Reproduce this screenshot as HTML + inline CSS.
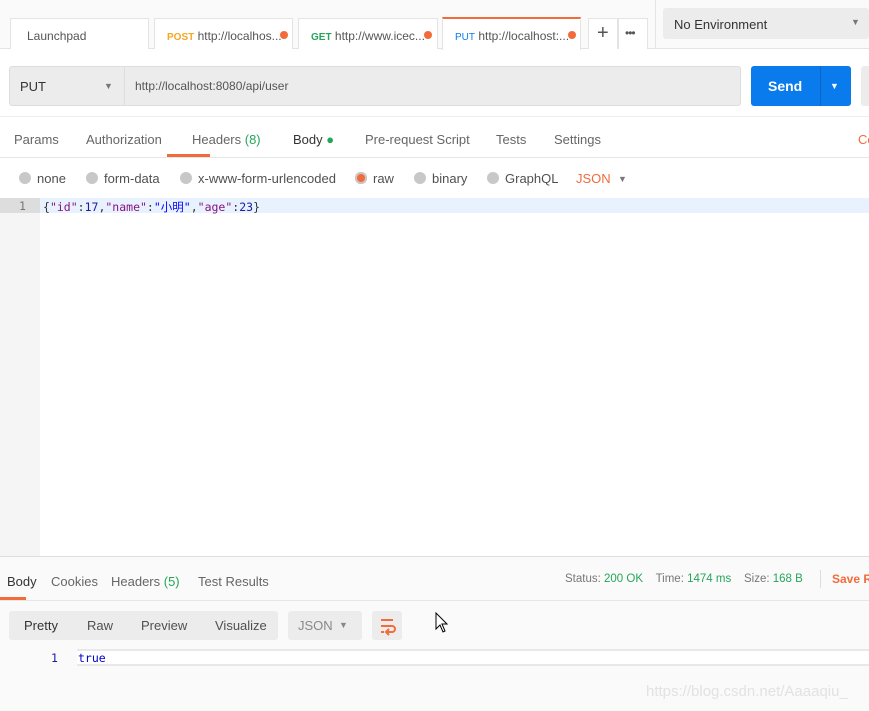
<!DOCTYPE html>
<html><head><meta charset="utf-8"><style>
*{box-sizing:border-box;margin:0;padding:0}
body{width:869px;height:711px;overflow:hidden;background:#fff;font-family:"Liberation Sans","Noto Sans CJK SC",sans-serif;font-size:13px;color:#505050;position:relative}
.a{position:absolute}
.tab{position:absolute;top:18px;height:31px;border:1px solid #e4e4e4;border-bottom:none;background:#fff;font-size:12px;padding:10px 0 0 12px;white-space:nowrap;color:#555}
.dot{position:absolute;width:8px;height:8px;border-radius:50%;background:#f26b3a}
.rad{position:absolute;top:172px;width:12px;height:12px;border-radius:50%;background:#c8c8c8}
.mono{font-family:"DejaVu Sans Mono","Liberation Mono","Noto Sans CJK SC",monospace;font-size:11.5px}
</style></head><body>
<div class="a" style="left:0;top:0;width:869px;height:49px;background:#fafafa;border-bottom:1px solid #e4e4e4"></div>
<div class="tab" style="left:10px;width:139px;padding-left:16px">Launchpad</div>
<div class="tab" style="left:154px;width:139px"><b style="color:#f5a623;font-size:10px">POST</b> http://localhos...</div><div class="dot" style="left:280px;top:31px"></div>
<div class="tab" style="left:298px;width:140px"><b style="color:#26a55a;font-size:10px">GET</b> http://www.icec...</div><div class="dot" style="left:424px;top:31px"></div>
<div class="tab" style="left:442px;width:139px;border-top:2px solid #f26b3a;top:17px;height:33px"><b style="color:#097bed;font-size:10px;font-weight:normal">PUT</b> http://localhost:...</div><div class="dot" style="left:568px;top:31px"></div>
<div class="tab" style="left:588px;width:30px;padding:3px 0 0 8px;font-size:20px;color:#555">+</div>
<div class="tab" style="left:618px;width:30px;padding:7px 0 0 6px;font-size:12px;letter-spacing:-1px;color:#555">•••</div>
<div class="a" style="left:655px;top:0;width:1px;height:49px;background:#e4e4e4"></div>
<div class="a" style="left:663px;top:8px;width:206px;height:31px;background:#ececec;border-radius:3px;padding:9px 0 0 11px;color:#333">No Environment<span style="position:absolute;left:188px;top:9px;font-size:9px;color:#777">▼</span></div>
<div class="a" style="left:9px;top:66px;width:732px;height:40px;background:#ececec;border:1px solid #ddd;border-radius:3px"></div>
<div class="a" style="left:124px;top:67px;width:1px;height:38px;background:#ddd"></div>
<div class="a" style="left:20px;top:79px;color:#333">PUT</div>
<div class="a" style="left:104px;top:81px;font-size:9px;color:#777">▼</div>
<div class="a" style="left:135px;top:79px;font-size:12px;color:#555">http://localhost:8080/api/user</div>
<div class="a" style="left:751px;top:66px;width:100px;height:40px;background:#097bed;border-radius:3px"></div>
<div class="a" style="left:820px;top:66px;width:1px;height:40px;background:#0a67c6"></div>
<div class="a" style="left:768px;top:78px;color:#fff;font-weight:bold;font-size:14px">Send</div>
<div class="a" style="left:830px;top:81px;color:#fff;font-size:9px">▼</div>
<div class="a" style="left:861px;top:66px;width:10px;height:40px;background:#ececec;border-radius:3px"></div>
<div class="a" style="left:0;top:116px;width:869px;height:1px;background:#eee"></div>
<div class="a" style="left:0;top:132px;width:869px;white-space:nowrap;color:#666">
<span class="a" style="left:14px">Params</span><span class="a" style="left:86px">Authorization</span><span class="a" style="left:192px">Headers <span style="color:#26a55a">(8)</span></span><span class="a" style="left:293px;color:#333">Body <span style="color:#26a55a">●</span></span><span class="a" style="left:365px">Pre-request Script</span><span class="a" style="left:496px">Tests</span><span class="a" style="left:554px">Settings</span><span class="a" style="left:858px;color:#f26b3a">Co</span></div>
<div class="a" style="left:167px;top:154px;width:43px;height:3px;background:#f26b3a"></div>
<div class="a" style="left:0;top:157px;width:869px;height:1px;background:#e6e6e6"></div>
<div class="rad" style="left:19px"></div><div class="a" style="left:37px;top:171px">none</div>
<div class="rad" style="left:86px"></div><div class="a" style="left:104px;top:171px">form-data</div>
<div class="rad" style="left:180px"></div><div class="a" style="left:198px;top:171px">x-www-form-urlencoded</div>
<div class="rad" style="left:355px;background:#f26b3a;box-shadow:inset 0 0 0 2px #c8c8c8"></div><div class="a" style="left:373px;top:171px">raw</div>
<div class="rad" style="left:414px"></div><div class="a" style="left:432px;top:171px">binary</div>
<div class="rad" style="left:487px"></div><div class="a" style="left:505px;top:171px">GraphQL</div>
<div class="a" style="left:576px;top:171px;color:#f26b3a">JSON</div><div class="a" style="left:618px;top:174px;font-size:9px;color:#777">▼</div>
<div class="a" style="left:0;top:198px;width:40px;height:358px;background:#f5f5f5"></div>
<div class="a" style="left:0;top:198px;width:40px;height:15px;background:#ddd"></div>
<div class="a" style="left:40px;top:198px;width:829px;height:15px;background:#e8f2ff"></div>
<div class="a mono" style="left:19px;top:199px;color:#777">1</div>
<div class="a mono" style="left:43px;top:199px;color:#333;white-space:nowrap">{<span style="color:#881280">"id"</span>:<span style="color:#1a1aa6">17</span>,<span style="color:#881280">"name"</span>:<span style="color:#0000ff">"小明"</span>,<span style="color:#881280">"age"</span>:<span style="color:#1a1aa6">23</span>}</div>
<div class="a" style="left:0;top:556px;width:869px;height:155px;background:#fafafa;border-top:1px solid #ddd"></div>
<div class="a" style="left:0;top:574px;width:869px;white-space:nowrap;color:#666">
<span class="a" style="left:7px;color:#333">Body</span><span class="a" style="left:51px">Cookies</span><span class="a" style="left:111px">Headers <span style="color:#26a55a">(5)</span></span><span class="a" style="left:198px">Test Results</span></div>
<div class="a" style="left:565px;top:573px;font-size:11.5px;white-space:nowrap;color:#777">Status: <span style="color:#26a55a">200 OK</span>&nbsp;&nbsp;&nbsp; Time: <span style="color:#26a55a">1474 ms</span>&nbsp;&nbsp;&nbsp; Size: <span style="color:#26a55a">168 B</span></div>
<div class="a" style="left:820px;top:570px;width:1px;height:18px;background:#ddd"></div>
<div class="a" style="left:832px;top:572px;color:#f26b3a;font-weight:bold;font-size:12px;white-space:nowrap">Save R</div>
<div class="a" style="left:0;top:597px;width:26px;height:3px;background:#f26b3a"></div>
<div class="a" style="left:0;top:600px;width:869px;height:1px;background:#e6e6e6"></div>
<div class="a" style="left:9px;top:611px;width:269px;height:29px;background:#ececec;border-radius:3px"></div>
<div class="a" style="left:24px;top:618px;color:#333">Pretty</div><div class="a" style="left:87px;top:618px">Raw</div><div class="a" style="left:141px;top:618px">Preview</div><div class="a" style="left:215px;top:618px">Visualize</div>
<div class="a" style="left:288px;top:611px;width:74px;height:29px;background:#ececec;border-radius:3px"></div>
<div class="a" style="left:298px;top:618px;color:#888">JSON</div><div class="a" style="left:339px;top:620px;font-size:9px;color:#888">▼</div>
<div class="a" style="left:372px;top:611px;width:30px;height:29px;background:#ececec;border-radius:3px"></div>
<svg class="a" style="left:377px;top:616px" width="20" height="20"><path d="M4 4h12M4 10h11a3 3 0 0 1 0 6h-5M12 13l-3 3 3 3M4 16h3" stroke="#f26b3a" stroke-width="2" fill="none"/></svg>
<svg class="a" style="left:435px;top:612px" width="14" height="22"><path d="M1 1v16l4-4 3 7 2-1-3-7h5z" fill="#fff" stroke="#000"/></svg>
<div class="a" style="left:77px;top:649px;width:792px;height:17px;border-top:2px solid #e8e8e8;border-bottom:2px solid #e8e8e8;background:#fff"></div>
<div class="a mono" style="left:51px;top:651px;color:#1a1aa6">1</div>
<div class="a mono" style="left:78px;top:651px;color:#0000cc">true</div>
<div class="a" style="left:646px;top:683px;color:#e2e2e2;font-size:15px;white-space:nowrap">https://blog.csdn.net/Aaaaqiu_</div>
</body></html>
